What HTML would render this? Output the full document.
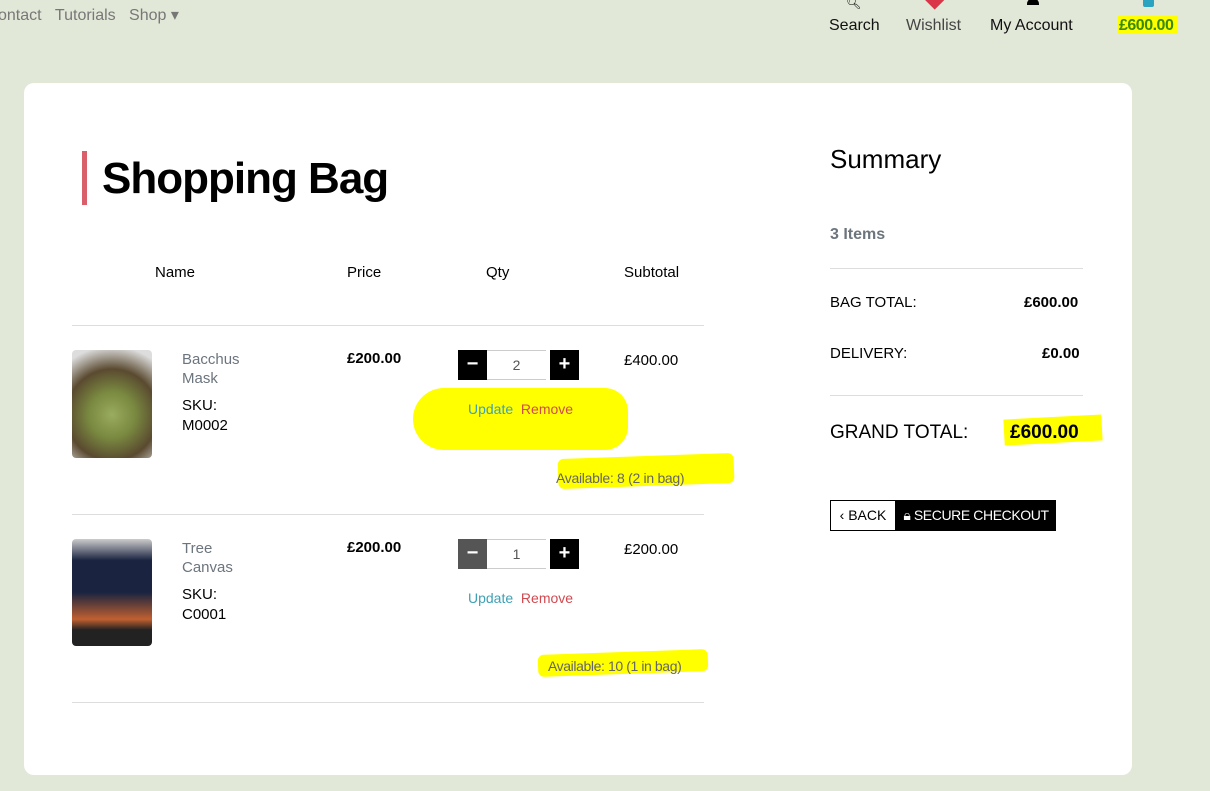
<!DOCTYPE html>
<html><head><style>
body{margin:0;width:1210px;height:791px;background:#e2e8d8;font-family:"Liberation Sans",sans-serif;position:relative;overflow:hidden}
.a{position:absolute;white-space:nowrap}
.card{position:absolute;left:24px;top:83px;width:1108px;height:692px;background:#fff;border-radius:10px}
.hr{position:absolute;height:1px;background:#ddd}
.yl{position:absolute;background:#ffff00}
.btn{position:absolute;width:29px;height:30px;color:#fff;font-size:20px;text-align:center;line-height:28px;font-weight:bold}
.inp{position:absolute;width:59px;height:28px;border:1px solid #ccc;border-left:none;border-right:none;text-align:center;line-height:28px;font-size:14px;color:#555}
</style></head><body>
<div class="a" style="left:-2px;top:5px;font-size:16px;color:#777">ontact&nbsp;&nbsp;&nbsp;Tutorials&nbsp;&nbsp;&nbsp;Shop ▾</div>
<div class="a" style="left:846px;top:-4px;font-size:12px">🔍︎</div>
<div class="a" style="left:926px;top:-8px;width:16px;height:14px;background:#d9364a;transform:rotate(45deg);"></div>
<div class="a" style="left:1027px;top:-2px;width:12px;height:7px;background:#000;border-radius:6px 6px 0 0"></div>
<div class="a" style="left:1143px;top:-3px;width:11px;height:10px;background:#2aa3c0;border-radius:2px"></div>
<div class="a" style="left:829px;top:17px;font-size:16px;color:#111">Search</div>
<div class="a" style="left:906px;top:17px;font-size:16px;color:#444">Wishlist</div>
<div class="a" style="left:990px;top:17px;font-size:16px;color:#111">My Account</div>
<div class="yl" style="left:1118px;top:16px;width:60px;height:18px"></div>
<div class="a" style="left:1119px;top:17px;font-size:16px;color:#3a8a00;font-weight:bold;letter-spacing:-0.5px">£600.00</div>
<div class="card"></div>
<div class="a" style="left:82px;top:151px;width:5px;height:54px;background:#d9606a"></div>
<div class="a" style="left:102px;top:154px;font-size:44px;font-weight:bold;color:#000;letter-spacing:-1px">Shopping Bag</div>
<div class="a" style="left:155px;top:264px;font-size:15px">Name</div>
<div class="a" style="left:347px;top:264px;font-size:15px">Price</div>
<div class="a" style="left:486px;top:264px;font-size:15px">Qty</div>
<div class="a" style="left:624px;top:264px;font-size:15px">Subtotal</div>
<div class="hr" style="left:72px;top:325px;width:632px"></div>
<div class="hr" style="left:72px;top:514px;width:632px"></div>
<div class="hr" style="left:72px;top:702px;width:632px"></div>
<div class="a" style="left:72px;top:350px;width:80px;height:108px;border-radius:4px;background:radial-gradient(circle at 50% 60%,#9aac60 0,#7a8a40 30%,#5a4a30 60%,#ddd 90%)"></div>
<div class="a" style="left:182px;top:350px;font-size:15px;color:#6c757d;line-height:19px">Bacchus<br>Mask</div>
<div class="a" style="left:182px;top:396px;font-size:15px;color:#000;line-height:20px">SKU:<br>M0002</div>
<div class="a" style="left:347px;top:350px;font-size:15px;font-weight:bold">£200.00</div>
<div class="yl" style="left:413px;top:388px;width:215px;height:62px;border-radius:40px 30px 30px 40px"></div>
<div class="btn" style="left:458px;top:350px;background:#000">−</div>
<div class="inp" style="left:487px;top:350px;background:#fff">2</div>
<div class="btn" style="left:550px;top:350px;background:#000">+</div>
<div class="a" style="left:468px;top:401px;font-size:14px;color:#3fa1b5">Update <span style="color:#d04a50">&nbsp;Remove</span></div>
<div class="a" style="left:624px;top:352px;font-size:15px">£400.00</div>
<div class="yl" style="left:558px;top:456px;width:176px;height:30px;border-radius:6px;transform:rotate(-2deg)"></div>
<div class="a" style="left:556px;top:470px;font-size:14px;color:#666;letter-spacing:-0.3px">Available: 8 (2 in bag)</div>
<div class="a" style="left:72px;top:539px;width:80px;height:107px;border-radius:4px;background:linear-gradient(#ccc 0%,#1a2440 20%,#1a2440 50%,#c06030 75%,#222 85%)"></div>
<div class="a" style="left:182px;top:539px;font-size:15px;color:#6c757d;line-height:19px">Tree<br>Canvas</div>
<div class="a" style="left:182px;top:585px;font-size:15px;color:#000;line-height:20px">SKU:<br>C0001</div>
<div class="a" style="left:347px;top:539px;font-size:15px;font-weight:bold">£200.00</div>
<div class="btn" style="left:458px;top:539px;background:#555">−</div>
<div class="inp" style="left:487px;top:539px;background:#fff">1</div>
<div class="btn" style="left:550px;top:539px;background:#000">+</div>
<div class="a" style="left:468px;top:590px;font-size:14px;color:#3fa1b5">Update <span style="color:#d04a50">&nbsp;Remove</span></div>
<div class="a" style="left:624px;top:541px;font-size:15px">£200.00</div>
<div class="yl" style="left:538px;top:652px;width:170px;height:22px;border-radius:6px;transform:rotate(-2deg)"></div>
<div class="a" style="left:548px;top:658px;font-size:14px;color:#666;letter-spacing:-0.4px">Available: 10 (1 in bag)</div>
<div class="a" style="left:830px;top:144px;font-size:26px;color:#000">Summary</div>
<div class="a" style="left:830px;top:226px;font-size:16px;color:#6c757d;font-weight:bold">3 Items</div>
<div class="hr" style="left:830px;top:268px;width:253px"></div>
<div class="a" style="left:830px;top:294px;font-size:15px">BAG TOTAL:</div>
<div class="a" style="left:1024px;top:294px;font-size:15px;font-weight:bold">£600.00</div>
<div class="a" style="left:830px;top:345px;font-size:15px">DELIVERY:</div>
<div class="a" style="left:1042px;top:345px;font-size:15px;font-weight:bold">£0.00</div>
<div class="hr" style="left:830px;top:395px;width:253px"></div>
<div class="yl" style="left:1004px;top:417px;width:98px;height:26px;transform:rotate(-3deg)"></div>
<div class="a" style="left:830px;top:422px;font-size:19px">GRAND TOTAL:</div>
<div class="a" style="left:1010px;top:422px;font-size:19px;font-weight:bold">£600.00</div>
<div class="a" style="left:830px;top:500px;width:64px;height:29px;border:1px solid #000;font-size:14px;line-height:29px;text-align:center">‹ BACK</div>
<div class="a" style="left:896px;top:500px;width:160px;height:31px;background:#000;color:#fff;font-size:14px;line-height:31px;text-align:center;letter-spacing:-0.4px">🔒︎ SECURE CHECKOUT</div>
</body></html>
